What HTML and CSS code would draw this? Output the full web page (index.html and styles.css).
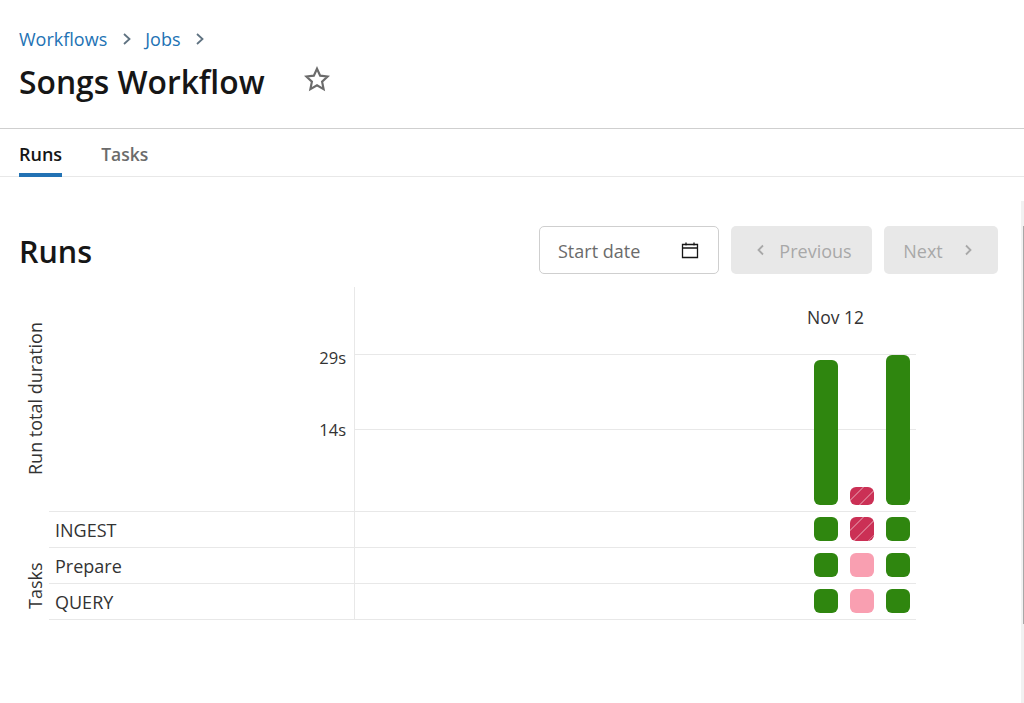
FILE: index.html
```html
<!doctype html>
<html lang="en">

<head>
	<meta charset="utf-8">
	<meta name="viewport" content="width=device-width, initial-scale=1">
	<title>Songs Workflow</title>
	<link rel="stylesheet" href="styles.css">
</head>

<body>

	<header class="page-header">
		<nav class="crumbs">
			<a class="crumb" href="#">Workflows</a>
			<svg class="crumb-sep" viewBox="0 0 16 16"><path d="M5 3l5.500 5L5 13"/></svg>
			<a class="crumb" href="#">Jobs</a>
			<svg class="crumb-sep" viewBox="0 0 16 16"><path d="M5 3l5.500 5L5 13"/></svg>
		</nav>
		<div class="title-row">
			<h1 class="title">Songs Workflow</h1>
			<svg class="star" viewBox="0 0 24 24"><path d="M12 2.500l2.900 6.400 6.900.8-5.100 4.700 1.400 6.900-6.100-3.500-6.100 3.500 1.400-6.900-5.100-4.700 6.900-.8z"/></svg>
		</div>
	</header>

	<div class="tabs">
		<a class="tab tab-active" href="#">Runs</a>
		<a class="tab" href="#">Tasks</a>
	</div>

	<main class="content">
		<div class="runs-head">
			<h2 class="runs-title">Runs</h2>
			<div class="date-input">
				<span>Start date</span>
				<svg class="cal" viewBox="0 0 18 18"><path d="M1.500 3.500h15v13h-15zM1.500 7h15M5 1.500v3M13 1.500v3"/></svg>
			</div>
			<button class="btn btn-prev" disabled>
				<svg class="chev" viewBox="0 0 16 16"><path d="M10 3.500L5.500 8l4.500 4.500"/></svg>
				Previous
			</button>
			<button class="btn btn-next" disabled>
				Next
				<svg class="chev" viewBox="0 0 16 16"><path d="M6 3.500L10.500 8 6 12.500"/></svg>
			</button>
		</div>

		<div class="matrix">
			<div class="side side-duration"><span>Run total duration</span></div>
			<div class="axis">
				<span class="tick">29s</span>
				<span class="tick">14s</span>
			</div>
			<div class="plot">
				<div class="plot-lines">
					<div class="plot-line"></div>
					<div class="plot-line"></div>
				</div>
				<div class="plot-date">Nov 12</div>
				<div class="bars">
					<div class="bar bar-green" style="height: 145px"></div>
					<div class="bar bar-red" style="height: 18px"></div>
					<div class="bar bar-green" style="height: 150px"></div>
				</div>
			</div>

			<div class="side side-tasks"><span>Tasks</span></div>
			<div class="task-name">INGEST</div>
			<div class="task-cells">
				<i class="cell bar-green"></i><i class="cell bar-red"></i><i class="cell bar-green"></i>
			</div>
			<div class="task-name">Prepare</div>
			<div class="task-cells">
				<i class="cell bar-green"></i><i class="cell bar-pink"></i><i class="cell bar-green"></i>
			</div>
			<div class="task-name">QUERY</div>
			<div class="task-cells">
				<i class="cell bar-green"></i><i class="cell bar-pink"></i><i class="cell bar-green"></i>
			</div>
		</div>
	</main>

	<div class="scroll-track"><div class="scroll-thumb"></div></div>

</body>
</html>
```

FILE: styles.css
```css
:root {
	--blue: #2272b4;
	--line: #e8e8e8;
	--green: #2f860f;
	--red: #cb3055;
	--pink: #f99fb1;
}

* {
	box-sizing: border-box;
	margin: 0;
	padding: 0;
}

html {
	height: 100%;
}

body {
	position: relative;
	height: 703px;
	overflow: hidden;
	color: #161616;
	font: 400 18px/24px 'Open Sans', sans-serif;
	background: #fff;
}

/* Шапка */

.page-header {
	height: 129px;
	padding: 27px 19px 0;
	border-bottom: 1px solid #cfcfcf;
}

.crumbs {
	display: flex;
	align-items: center;
	gap: 8px;
	height: 24px;
}

.crumb {
	color: var(--blue);
	font-size: 18px;
	text-decoration: none;
}

.crumb-sep {
	width: 16px;
	height: 16px;
	margin: 0 2px 0 4px;
	fill: none;
	stroke: #5f7281;
	stroke-width: 1.8;
}

.title-row {
	display: flex;
	align-items: center;
	gap: 39px;
	margin-top: 8px;
}

.title {
	font-size: 31.800px;
	line-height: 46px;
	font-weight: 600;
}

.star {
	width: 26px;
	height: 26px;
	margin-top: -7px;
	fill: none;
	stroke: #6b6b6b;
	stroke-width: 2;
}

/* Табы */

.tabs {
	display: flex;
	gap: 39px;
	height: 48px;
	padding: 0 19px;
	border-bottom: 1px solid var(--line);
}

.tab {
	height: 48px;
	padding-top: 13px;
	color: #6b6b6b;
	font-size: 17.500px;
	font-weight: 600;
	text-decoration: none;
}

.tab-active {
	color: #161616;
	font-size: 18px;
	border-bottom: 4px solid var(--blue);
}

/* Контент */

.content {
	padding: 49px 26px 0 19px;
}

.runs-head {
	display: flex;
	align-items: center;
	height: 48px;
}

.runs-title {
	margin-right: auto;
	padding-top: 2px;
	font-size: 30.500px;
	font-weight: 600;
}

.date-input {
	display: flex;
	align-items: center;
	justify-content: space-between;
	width: 180px;
	height: 48px;
	padding: 0 19px 0 18px;
	color: #6b6b6b;
	font-size: 18px;
	border: 1px solid #cfcfcf;
	border-radius: 5px;
}

.date-input span {
	padding-top: 2px;
}

.cal {
	width: 18px;
	height: 18px;
	fill: none;
	stroke: #161616;
	stroke-width: 1.300;
}

.btn {
	display: flex;
	align-items: center;
	justify-content: center;
	height: 48px;
	margin-left: 12px;
	padding-top: 1px;
	color: #a8a8a8;
	font: 400 18px/24px 'Open Sans', sans-serif;
	background: #e8e8e8;
	border: 0;
	border-radius: 5px;
}

.btn-prev {
	gap: 10px;
	width: 141px;
	padding-left: 2px;
}

.btn-next {
	gap: 17px;
	width: 114px;
	padding-right: 3px;
}

.chev {
	width: 16px;
	height: 16px;
	margin-top: -1px;
	fill: none;
	stroke: #a8a8a8;
	stroke-width: 1.800;
}

/* Матрица запусков */

.matrix {
	display: grid;
	grid-template-columns: 30px 306px 561px;
	grid-template-rows: 225px repeat(3, 36px);
	margin-top: 13px;
	font-size: 16px;
}

.side {
	display: flex;
	align-items: center;
	justify-content: center;
	padding-top: 1px;
	color: #333;
	font-size: 18px;
	writing-mode: vertical-rl;
	transform: rotate(180deg);
}

.side-duration {
	padding-right: 2px;
}

.side-tasks {
	grid-row: span 3;
	justify-content: flex-start;
	padding: 11px 2px 0 0;
}

.axis {
	display: flex;
	flex-direction: column;
	align-items: flex-end;
	padding: 59px 8px 0 0;
	font-size: 16.500px;
	border-right: 1px solid var(--line);
	border-bottom: 1px solid var(--line);
}

.tick {
	height: 72px;
	color: #333;
}

.plot {
	display: grid;
	border-bottom: 1px solid var(--line);
}

.plot > * {
	grid-area: 1 / 1;
}

.plot-lines {
	padding-top: 67px;
}

.plot-line {
	height: 75px;
	border-top: 1px solid var(--line);
}

.plot-date {
	padding: 18px 52px 0 0;
	text-align: right;
	font-size: 17.500px;
	color: #333;
}

.bars,
.task-cells {
	display: flex;
	justify-content: flex-end;
	gap: 12px;
	padding-right: 6px;
}

.bars {
	align-items: flex-end;
	padding-bottom: 6px;
}

.bar {
	width: 24px;
	border-radius: 6px;
}

.task-name {
	padding: 6px 0 0 6px;
	color: #333;
	font-size: 18px;
	border-right: 1px solid var(--line);
	border-bottom: 1px solid var(--line);
}

.task-cells {
	align-items: flex-start;
	padding-top: 5px;
	border-bottom: 1px solid var(--line);
}

.cell {
	display: block;
	width: 24px;
	height: 24px;
	border-radius: 6px;
}

.bar-green {
	background: var(--green);
}

.bar-pink {
	background: var(--pink);
}

.bar-red {
	background: var(--red) repeating-linear-gradient(135deg, transparent 0, transparent 9px, rgba(255, 255, 255, .3) 9px, rgba(255, 255, 255, .3) 10px);
}

/* Скролл поверх страницы */

.scroll-track {
	position: absolute;
	top: 201px;
	right: 0;
	bottom: 0;
	width: 3px;
	padding: 25px 0 79px 2px;
	background: #f1f1f1;
}

.scroll-thumb {
	height: 100%;
	background: #a8a8a8;
}
```
